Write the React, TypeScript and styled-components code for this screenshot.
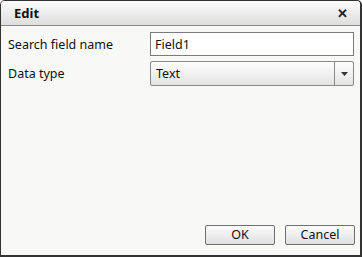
import React from "react";
import styled, { createGlobalStyle } from "styled-components";

const Global = createGlobalStyle`
  html, body { margin: 0; padding: 0; background: #ffffff; }
  body { font-family: "Noto Sans", "Liberation Sans", sans-serif; }
  * { box-sizing: border-box; }
`;

const Dialog = styled.div`
  width: 362px;
  height: 257px;
  display: flex;
  flex-direction: column;
  border: 1px solid #333;
  border-right-width: 2px;
  border-bottom-width: 2px;
  border-radius: 5px 5px 0 0;
  background: #f8f9f7;
  overflow: hidden;
  font-family: "Noto Sans", "Liberation Sans", sans-serif;
  font-size: 12.5px;
  color: #111;
`;

const TitleBar = styled.div`
  height: 25px;
  flex: none;
  display: flex;
  align-items: center;
  justify-content: space-between;
  padding: 0 12px 0 13px;
  background: linear-gradient(#fbfbfb, #dedede);
  border-bottom: 1px solid #8a8a8a;
`;

const Title = styled.span`
  font-weight: bold;
  font-size: 13px;
  color: #111;
`;

const Close = styled.span`
  font-weight: bold;
  font-size: 13px;
  line-height: 1;
  color: #222;
`;

const Body = styled.div`
  flex: 1;
  display: flex;
  flex-direction: column;
  justify-content: space-between;
  padding: 6px 5px 10px 7px;
`;

const Form = styled.div`
  display: grid;
  grid-template-columns: 142px 1fr;
  row-gap: 5px;
  align-items: center;
  padding-right: 1px;
`;

const Label = styled.label`
  font-size: 12.5px;
  color: #111;
`;

const TextBox = styled.input`
  height: 24px;
  width: 100%;
  border: 1px solid #7c7c7c;
  background: #fff;
  padding: 0 4px;
  font-family: inherit;
  font-size: 12.5px;
  color: #111;
  outline: none;
`;

const Select = styled.div`
  height: 25px;
  display: flex;
  border: 1px solid #8a8a8a;
  border-radius: 2px;
  background: linear-gradient(#fdfdfd, #e3e3e3);
`;

const SelectValue = styled.span`
  flex: 1;
  display: flex;
  align-items: center;
  padding-left: 5px;
  font-size: 12.5px;
`;

const SelectArrow = styled.span`
  width: 19px;
  display: flex;
  align-items: center;
  justify-content: center;
  border-left: 1px solid #8a8a8a;
`;

const Footer = styled.div`
  display: flex;
  justify-content: flex-end;
  gap: 10px;
`;

const Button = styled.button`
  width: 70px;
  height: 20px;
  border: 1px solid #707070;
  border-radius: 2px;
  background: linear-gradient(#fcfcfc, #dfdfdf);
  font-family: inherit;
  font-size: 12.5px;
  line-height: 18px;
  color: #111;
  padding: 0;
`;

export default function App() {
  return (
    <>
      <Global />
      <Dialog>
        <TitleBar>
          <Title>Edit</Title>
          <Close>✕</Close>
        </TitleBar>
        <Body>
          <Form>
            <Label>Search field name</Label>
            <TextBox defaultValue="Field1" />
            <Label>Data type</Label>
            <Select>
              <SelectValue>Text</SelectValue>
              <SelectArrow>
                <svg width="7" height="4" viewBox="0 0 7 4">
                  <path d="M0 0H7L3.5 4Z" fill="#333" />
                </svg>
              </SelectArrow>
            </Select>
          </Form>
          <Footer>
            <Button>OK</Button>
            <Button>Cancel</Button>
          </Footer>
        </Body>
      </Dialog>
    </>
  );
}
